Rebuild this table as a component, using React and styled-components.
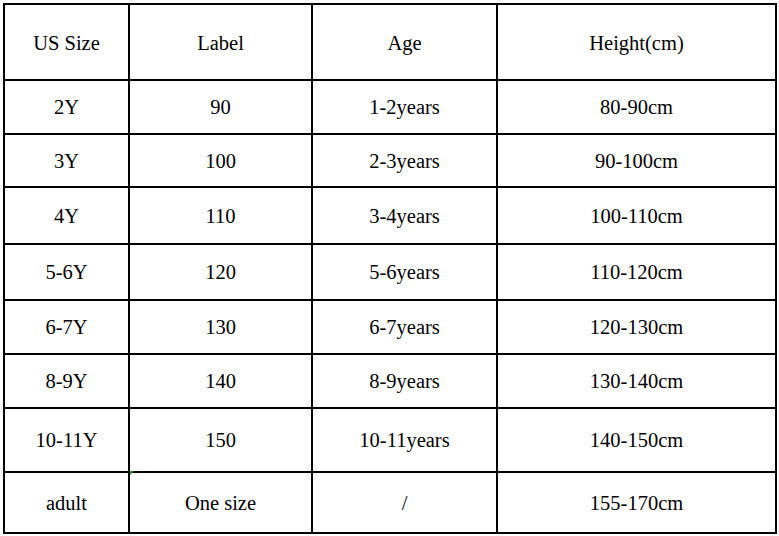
import styled, { createGlobalStyle } from 'styled-components';

const GlobalStyle = createGlobalStyle`
  html, body {
    margin: 0;
    padding: 0;
    background: #ffffff;
  }
`;

const Page = styled.div`
  width: 779px;
  height: 536px;
  padding: 3px 0 0 3px;
  box-sizing: border-box;
  background: #ffffff;
`;

const Grid = styled.div`
  position: relative;
  width: 774px;
  display: grid;
  grid-template-columns: 123px 181px 183px 277px;
  grid-template-rows: 74px 52px 51px 55px 54px 52px 52px 62px 59px;
  gap: 2px;
  padding: 2px;
  box-sizing: border-box;
  background: #000000;
`;

const Cell = styled.div`
  background: #ffffff;
  display: flex;
  align-items: center;
  justify-content: center;
  font-family: "Liberation Serif", "Times New Roman", serif;
  font-size: 20.5px;
  color: #000000;
  padding-top: ${(p) => (p.$head ? '2px' : '1px')};
`;

const Marker = styled.span`
  position: absolute;
  left: 127px;
  top: 468px;
  width: 0;
  height: 0;
  border-top: 4px solid #1e8a2e;
  border-right: 4px solid transparent;
`;

const head = ['US Size', 'Label', 'Age', 'Height(cm)'];

const rows = [
  ['2Y', '90', '1-2years', '80-90cm'],
  ['3Y', '100', '2-3years', '90-100cm'],
  ['4Y', '110', '3-4years', '100-110cm'],
  ['5-6Y', '120', '5-6years', '110-120cm'],
  ['6-7Y', '130', '6-7years', '120-130cm'],
  ['8-9Y', '140', '8-9years', '130-140cm'],
  ['10-11Y', '150', '10-11years', '140-150cm'],
  ['adult', 'One size', '/', '155-170cm'],
];

const App = () => {
  return (
    <>
      <GlobalStyle />
      <Page>
        <Grid>
          {head.map((h) => (
            <Cell key={h} $head>
              {h}
            </Cell>
          ))}
          {rows.map((r) =>
            r.map((c, i) => <Cell key={r[0] + i}>{c}</Cell>)
          )}
          <Marker />
        </Grid>
      </Page>
    </>
  );
};

export default App;
